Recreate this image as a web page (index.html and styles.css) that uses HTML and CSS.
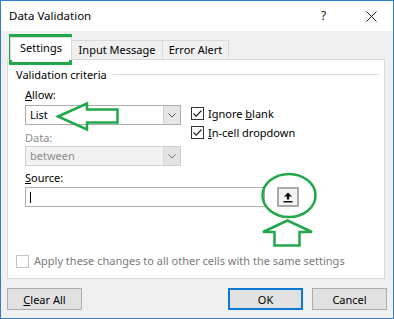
FILE: index.html
```html
<!DOCTYPE html>
<html>
<head>
<meta charset="utf-8">
<link rel="stylesheet" href="styles.css">
</head>
<body>
<div class="dialog">
  <div class="titlebar">
    <span class="title">Data Validation</span>
    <span class="help">?</span>
    <span class="close">
      <svg width="11" height="11" viewBox="0 0 11 11"><path d="M0.5 0.5 L10.5 10.5 M10.5 0.5 L0.5 10.5" stroke="#222" stroke-width="1" fill="none"/></svg>
    </span>
  </div>

  <div class="tabs">
    <div class="tab tab-settings active">Settings</div>
    <div class="tab tab-input">Input Message</div>
    <div class="tab tab-error">Error Alert</div>
  </div>

  <div class="panel">
    <div class="group-head"><span>Validation criteria</span><span class="rule"></span></div>

    <div class="criteria">
      <div class="col-left">
        <div class="label"><u>A</u>llow:</div>
        <div class="select">
          <span class="value">List</span>
          <span class="dd"><svg width="8" height="5" viewBox="0 0 8 5"><path d="M0.5 0.5 L4 4 L7.5 0.5" stroke="#555" stroke-width="1" fill="none"/></svg></span>
        </div>
        <div class="label label-data disabled">Data:</div>
        <div class="select disabled">
          <span class="value">between</span>
          <span class="dd"><svg width="8" height="5" viewBox="0 0 8 5"><path d="M0.5 0.5 L4 4 L7.5 0.5" stroke="#777" stroke-width="1" fill="none"/></svg></span>
        </div>
      </div>
      <div class="col-checks">
        <div class="check">
          <span class="box"><svg width="11" height="11" viewBox="0 0 11 11"><path d="M1.5 5.5 L4.2 8.2 L9.5 2.5" stroke="#222" stroke-width="1.2" fill="none"/></svg></span>
          <span>Ignore <u>b</u>lank</span>
        </div>
        <div class="check">
          <span class="box"><svg width="11" height="11" viewBox="0 0 11 11"><path d="M1.5 5.5 L4.2 8.2 L9.5 2.5" stroke="#222" stroke-width="1.2" fill="none"/></svg></span>
          <span><u>I</u>n-cell dropdown</span>
        </div>
      </div>
    </div>

    <div class="label label-source"><u>S</u>ource:</div>
    <div class="source-row">
      <div class="source-input"><span class="caret"></span></div>
      <div class="ref-btn">
        <svg width="10" height="11" viewBox="0 0 10 11"><path d="M5 0.5 L9 4.5 L6.2 4.5 L6.2 7.5 L3.8 7.5 L3.8 4.5 L1 4.5 Z" fill="#111"/><rect x="0.5" y="9" width="9" height="1.5" fill="#111"/></svg>
      </div>
    </div>

    <div class="apply">
      <span class="box box-disabled"></span>
      <span>Apply these changes to all other cells with the same settings</span>
    </div>
  </div>

  <div class="footer">
    <button class="btn"><u>C</u>lear All</button>
    <span class="spacer"></span>
    <button class="btn btn-default">OK</button>
    <button class="btn">Cancel</button>
  </div>

  <svg class="annot" width="394" height="319" viewBox="0 0 394 319">
    <rect x="10.5" y="35.5" width="60" height="28" fill="none" stroke="#22a84a" stroke-width="3"/>
    <polygon points="58,116.5 87,103.5 87,109.5 117.5,109.5 117.5,122.5 87,122.5 87,129.5" fill="none" stroke="#22a84a" stroke-width="2.5" stroke-linejoin="miter"/>
    <ellipse cx="289" cy="195.5" rx="26.5" ry="21.5" fill="none" stroke="#22a84a" stroke-width="2.5"/>
    <polygon points="287.5,220.5 312,232 299.5,232 299.5,245.5 274.5,245.5 274.5,232 263,232" fill="none" stroke="#22a84a" stroke-width="2.5"/>
  </svg>
</div>
</body>
</html>
```

FILE: styles.css
```css
* { box-sizing: border-box; }

html, body {
  margin: 0;
  padding: 0;
  background: #ffffff;
}

body {
  font-family: "Noto Sans", "Open Sans", sans-serif;
  font-size: 11px;
  line-height: 16px;
  color: #000;
}

.dialog {
  position: relative;
  width: 394px;
  height: 319px;
  border: 1px solid #2f7fcc;
  background: #f0f0f0;
  display: flex;
  flex-direction: column;
  overflow: hidden;
}

.titlebar {
  height: 30px;
  background: #ffffff;
  display: flex;
  align-items: center;
  padding-left: 8px;
  flex-shrink: 0;
}

.title {
  flex: 1;
  font-size: 11.5px;
}

.help {
  font-size: 12px;
  width: 10px;
  margin-right: 35px;
  color: #222;
}

.close {
  display: flex;
  margin-right: 16px;
}

.tabs {
  display: flex;
  align-items: flex-end;
  margin-top: 6px;
  margin-left: 9px;
  margin-bottom: -1px;
  position: relative;
  z-index: 1;
}

.tab {
  height: 19px;
  margin-bottom: 1px;
  border: 1px solid #d9d9d9;
  border-bottom: none;
  background: #f0f0f0;
  text-align: center;
  padding-top: 1px;
}

.tab + .tab { border-left: none; }

.tab-settings { width: 62px; }
.tab-input { width: 91px; border-left: 1px solid #d9d9d9; }
.tab-error { width: 66px; }

.tab.active {
  height: 23px;
  margin-bottom: 0;
  background: #ffffff;
  padding-top: 2px;
}

.panel {
  margin: 0 8px 0 6px;
  height: 220px;
  background: #ffffff;
  border: 1px solid #d9d9d9;
  padding: 7px 5px 0 8px;
  display: flex;
  flex-direction: column;
}

.group-head {
  display: flex;
  align-items: center;
  height: 16px;
}

.group-head .rule {
  flex: 1;
  height: 1px;
  background: #dcdcdc;
  margin-left: 6px;
  margin-top: -1px;
}

.criteria {
  display: flex;
  padding-left: 9px;
  margin-top: 4px;
}

.col-left {
  width: 156px;
  display: flex;
  flex-direction: column;
}

.label { height: 16px; }
.label-data { margin-top: 5px; }
.disabled { color: #8c8c8c; }

.select {
  height: 20px;
  margin-top: 2px;
  border: 1px solid #adadad;
  background: #ffffff;
  display: flex;
  align-items: stretch;
}

.select .value {
  flex: 1;
  padding-left: 4px;
  line-height: 18px;
}

.select .dd {
  width: 17px;
  background: #e6e6e6;
  border-left: 1px solid #d0d0d0;
  display: flex;
  align-items: center;
  justify-content: center;
}

.select.disabled {
  margin-top: 0;
  background: #f2f2f2;
  border-color: #cfcfcf;
  color: #8c8c8c;
}

.select.disabled .dd {
  background: #e3e3e3;
  border-left-color: #d6d6d6;
}

.col-checks {
  margin-left: 10px;
  padding-top: 18px;
  display: flex;
  flex-direction: column;
  gap: 2px;
}

.check {
  height: 17px;
  display: flex;
  align-items: center;
  gap: 4px;
}

.box {
  width: 13px;
  height: 13px;
  border: 1px solid #333333;
  background: #ffffff;
  display: flex;
  align-items: center;
  justify-content: center;
}

.label-source {
  margin-top: 4px;
  padding-left: 9px;
}

.source-row {
  display: flex;
  align-items: flex-start;
  padding-left: 9px;
  margin-top: 1px;
}

.source-input {
  width: 240px;
  height: 20px;
  border: 1px solid #adadad;
  background: #ffffff;
  padding: 4px 0 0 4px;
}

.caret {
  display: block;
  width: 1px;
  height: 11px;
  background: #000;
}

.ref-btn {
  width: 22px;
  height: 20px;
  margin-left: 12px;
  border: 2px solid #a9a9a9;
  background: #f4f4f4;
  display: flex;
  align-items: center;
  justify-content: center;
}

.apply {
  margin-top: 46px;
  height: 16px;
  display: flex;
  align-items: center;
  gap: 5px;
  color: #7a7a7a;
}

.box-disabled {
  border-color: #c4c4c4;
}

.footer {
  flex: 1;
  display: flex;
  align-items: flex-start;
  padding: 9px 6px 0 6px;
}

.spacer { flex: 1; }

.btn {
  width: 75px;
  height: 22px;
  border: 1px solid #adadad;
  background: #e1e1e1;
  font-family: inherit;
  font-size: 11px;
  color: #000;
  padding: 0;
}

.btn-default {
  border: 2px solid #0a78d4;
  margin-right: 9px;
}

.annot {
  position: absolute;
  left: -1px;
  top: -1px;
  pointer-events: none;
}
```
